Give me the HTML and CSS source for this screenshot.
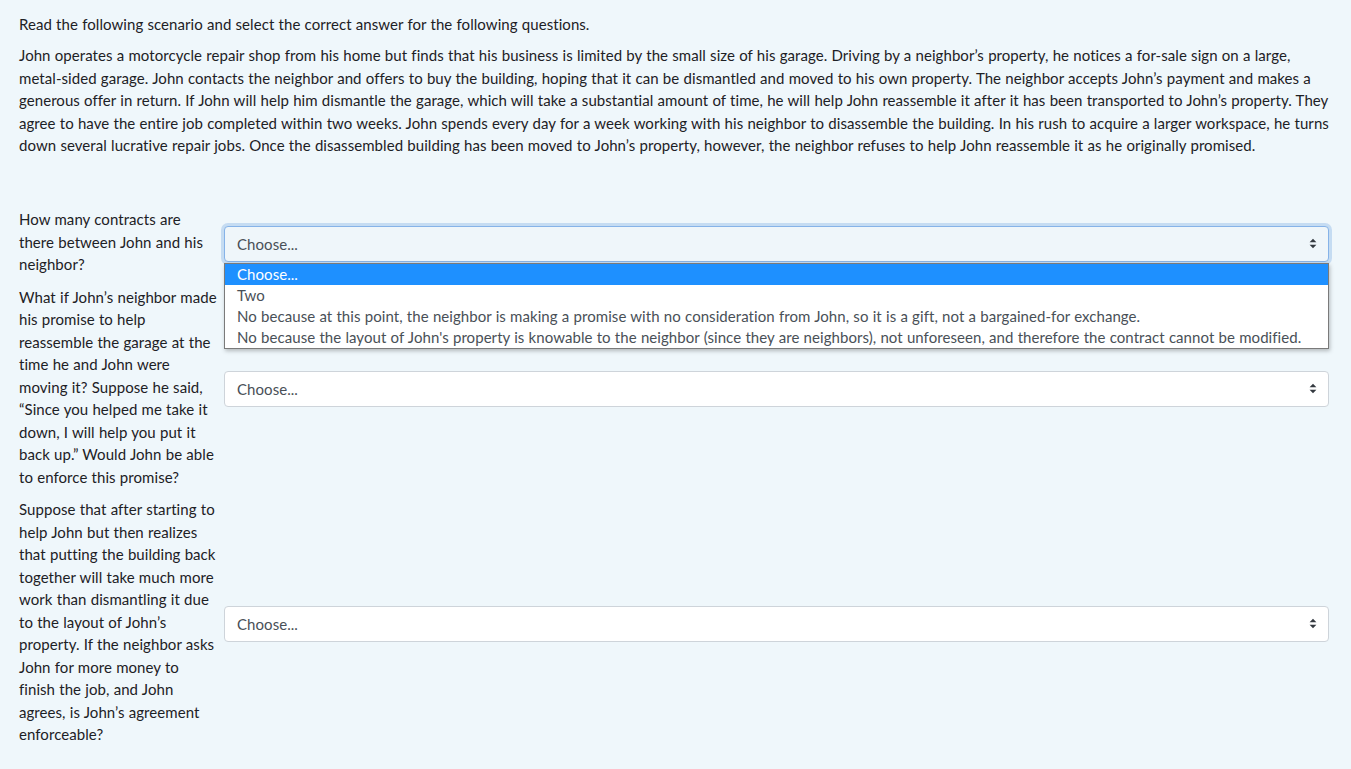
FILE: index.html
```html
<!DOCTYPE html>
<html>
<head>
<meta charset="utf-8">
<title>Scenario questions</title>
<link rel="stylesheet" href="styles.css">
</head>
<body>
<div class="page">
  <p class="intro">Read the following scenario and select the correct answer for the following questions.</p>
  <p class="scenario">John operates a motorcycle repair shop from his home but finds that his business is limited by the small size of his garage. Driving by a neighbor’s property, he notices a for-sale sign on a large, <span class="nowrap">metal-sided</span> garage. John contacts the neighbor and offers to buy the building, hoping that it can be dismantled and moved to his own property. The neighbor accepts John’s payment and makes a generous offer in return. If John will help him dismantle the garage, which will take a substantial amount of time, he will help John reassemble it after it has been transported to John’s property. They agree to have the entire job completed within two weeks. John spends every day for a week working with his neighbor to disassemble the building. In his rush to acquire a larger workspace, he turns down several lucrative repair jobs. Once the disassembled building has been moved to John’s property, however, the neighbor refuses to help John reassemble it as he originally promised.</p>

  <div class="questions">
    <div class="row">
      <div class="label">How many contracts are there between John and his neighbor?</div>
      <div class="control">
        <div class="select focused">
          <span class="value">Choose...</span>
          <svg class="arrows" width="8" height="11" viewBox="0 0 8 11"><path d="M4 0.8 L7.4 4.3 H0.6 Z M4 10.2 L7.4 6.7 H0.6 Z" fill="#343a40"/></svg>
        </div>
        <ul class="popup">
          <li class="active">Choose...</li>
          <li>Two</li>
          <li>No because at this point, the neighbor is making a promise with no consideration from John, so it is a gift, not a bargained-for exchange.</li>
          <li>No because the layout of John's property is knowable to the neighbor (since they are neighbors), not unforeseen, and therefore the contract cannot be modified.</li>
        </ul>
      </div>
    </div>

    <div class="row">
      <div class="label">What if John’s neighbor made his promise to help reassemble the garage at the time he and John were moving it? Suppose he said, “Since you helped me take it down, I will help you put it back up.” Would John be able to enforce this promise?</div>
      <div class="control">
        <div class="select">
          <span class="value">Choose...</span>
          <svg class="arrows" width="8" height="11" viewBox="0 0 8 11"><path d="M4 0.8 L7.4 4.3 H0.6 Z M4 10.2 L7.4 6.7 H0.6 Z" fill="#343a40"/></svg>
        </div>
      </div>
    </div>

    <div class="row">
      <div class="label">Suppose that after starting to help John but then realizes that putting the building back together will take much more work than dismantling it due to the layout of John’s property. If the neighbor asks John for more money to finish the job, and John agrees, is John’s agreement enforceable?</div>
      <div class="control">
        <div class="select">
          <span class="value">Choose...</span>
          <svg class="arrows" width="8" height="11" viewBox="0 0 8 11"><path d="M4 0.8 L7.4 4.3 H0.6 Z M4 10.2 L7.4 6.7 H0.6 Z" fill="#343a40"/></svg>
        </div>
      </div>
    </div>
  </div>
</div>
</body>
</html>
```
FILE: styles.css
```css
html, body {
  margin: 0;
  padding: 0;
  background: #eff7fb;
}
body {
  font-family: Lato, "Open Sans", sans-serif;
  font-size: 15px;
  line-height: 22.5px;
  color: #1d2125;
  letter-spacing: 0.06px;
  word-spacing: 0.3px;
}
.page {
  width: 1310px;
  padding: 13px 0 0 19px;
}
.intro {
  margin: 0 0 8.5px;
}
.scenario {
  margin: 0 0 51.5px;
}
.nowrap {
  white-space: nowrap;
}
.questions {
  display: flex;
  flex-direction: column;
  gap: 6px;
}
.row {
  display: flex;
  align-items: center;
}
.label {
  flex: 0 0 198px;
  margin-right: 7px;
  padding-bottom: 4px;
}
.control {
  flex: 1 1 auto;
  position: relative;
}
.select {
  height: 36px;
  box-sizing: border-box;
  border: 1px solid #ced4da;
  border-radius: 4px;
  background: #fff;
  display: flex;
  align-items: center;
  justify-content: space-between;
  padding: 0 11px 0 12px;
  color: #495057;
}
.select.focused {
  background: #eff6fa;
  border-color: #86b3e8;
  box-shadow: 0 0 0 3px rgba(120, 170, 225, 0.35);
}
.value {
  line-height: 22px;
}
.arrows {
  display: block;
}
.popup {
  position: absolute;
  left: 0;
  right: 0;
  top: 37px;
  margin: 0;
  padding: 0;
  list-style: none;
  background: #fff;
  border: 1px solid #7a7a7a;
  box-shadow: 1px 2px 4px rgba(0, 0, 0, 0.25);
  color: #495057;
  z-index: 5;
}
.popup li {
  height: 21px;
  line-height: 21px;
  padding-left: 12px;
  white-space: nowrap;
}
.popup li.active {
  background: #1e90ff;
  color: #fff;
}
```
